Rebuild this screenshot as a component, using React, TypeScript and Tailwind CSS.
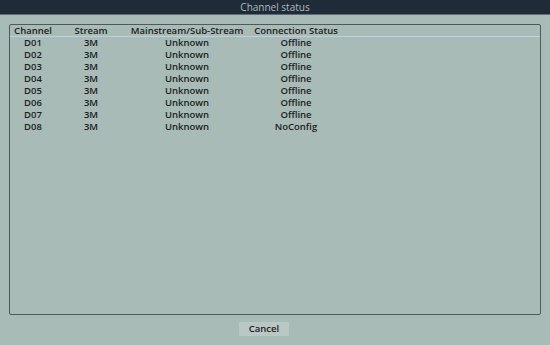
const rows = [
  ['D01', '3M', 'Unknown', 'Offline'],
  ['D02', '3M', 'Unknown', 'Offline'],
  ['D03', '3M', 'Unknown', 'Offline'],
  ['D04', '3M', 'Unknown', 'Offline'],
  ['D05', '3M', 'Unknown', 'Offline'],
  ['D06', '3M', 'Unknown', 'Offline'],
  ['D07', '3M', 'Unknown', 'Offline'],
  ['D08', '3M', 'Unknown', 'NoConfig'],
]

const cols = 'grid grid-cols-[46px_70px_122px_96px]'

export default function App() {
  return (
    <div className="flex h-[345px] w-[550px] flex-col bg-[#a9bbb7] font-['Open_Sans',sans-serif] text-[#1b2120]">
      <div className="flex h-[15px] items-center justify-center border-b border-[#5f6e70] bg-[#1f2c37] text-[10px] text-[#aeb9bd]">
        Channel status
      </div>
      <div className="mx-[9px] mt-[9px] flex h-[291px] flex-col rounded-[2px] border border-[#4f5b59]">
        <div className={`${cols} h-[12px] items-center border-b border-[#b9d3de] text-[9.5px] font-semibold leading-[12px]`}>
          <div className="text-center">Channel</div>
          <div className="text-center">Stream</div>
          <div className="text-center">Mainstream/Sub-Stream</div>
          <div className="text-center">Connection Status</div>
        </div>
        <div>
          {rows.map((r) => (
            <div key={r[0]} className={`${cols} h-[12px] items-center text-[9.5px] font-semibold leading-[12px]`}>
              {r.map((c, i) => (
                <div key={i} className="text-center">
                  {c}
                </div>
              ))}
            </div>
          ))}
        </div>
      </div>
      <div className="flex pl-[239px] pt-[7px]">
        <button className="h-[14px] w-[50px] bg-[#bac7c5] text-[9.5px] font-semibold leading-none text-[#1b2120]">
          Cancel
        </button>
      </div>
    </div>
  )
}
